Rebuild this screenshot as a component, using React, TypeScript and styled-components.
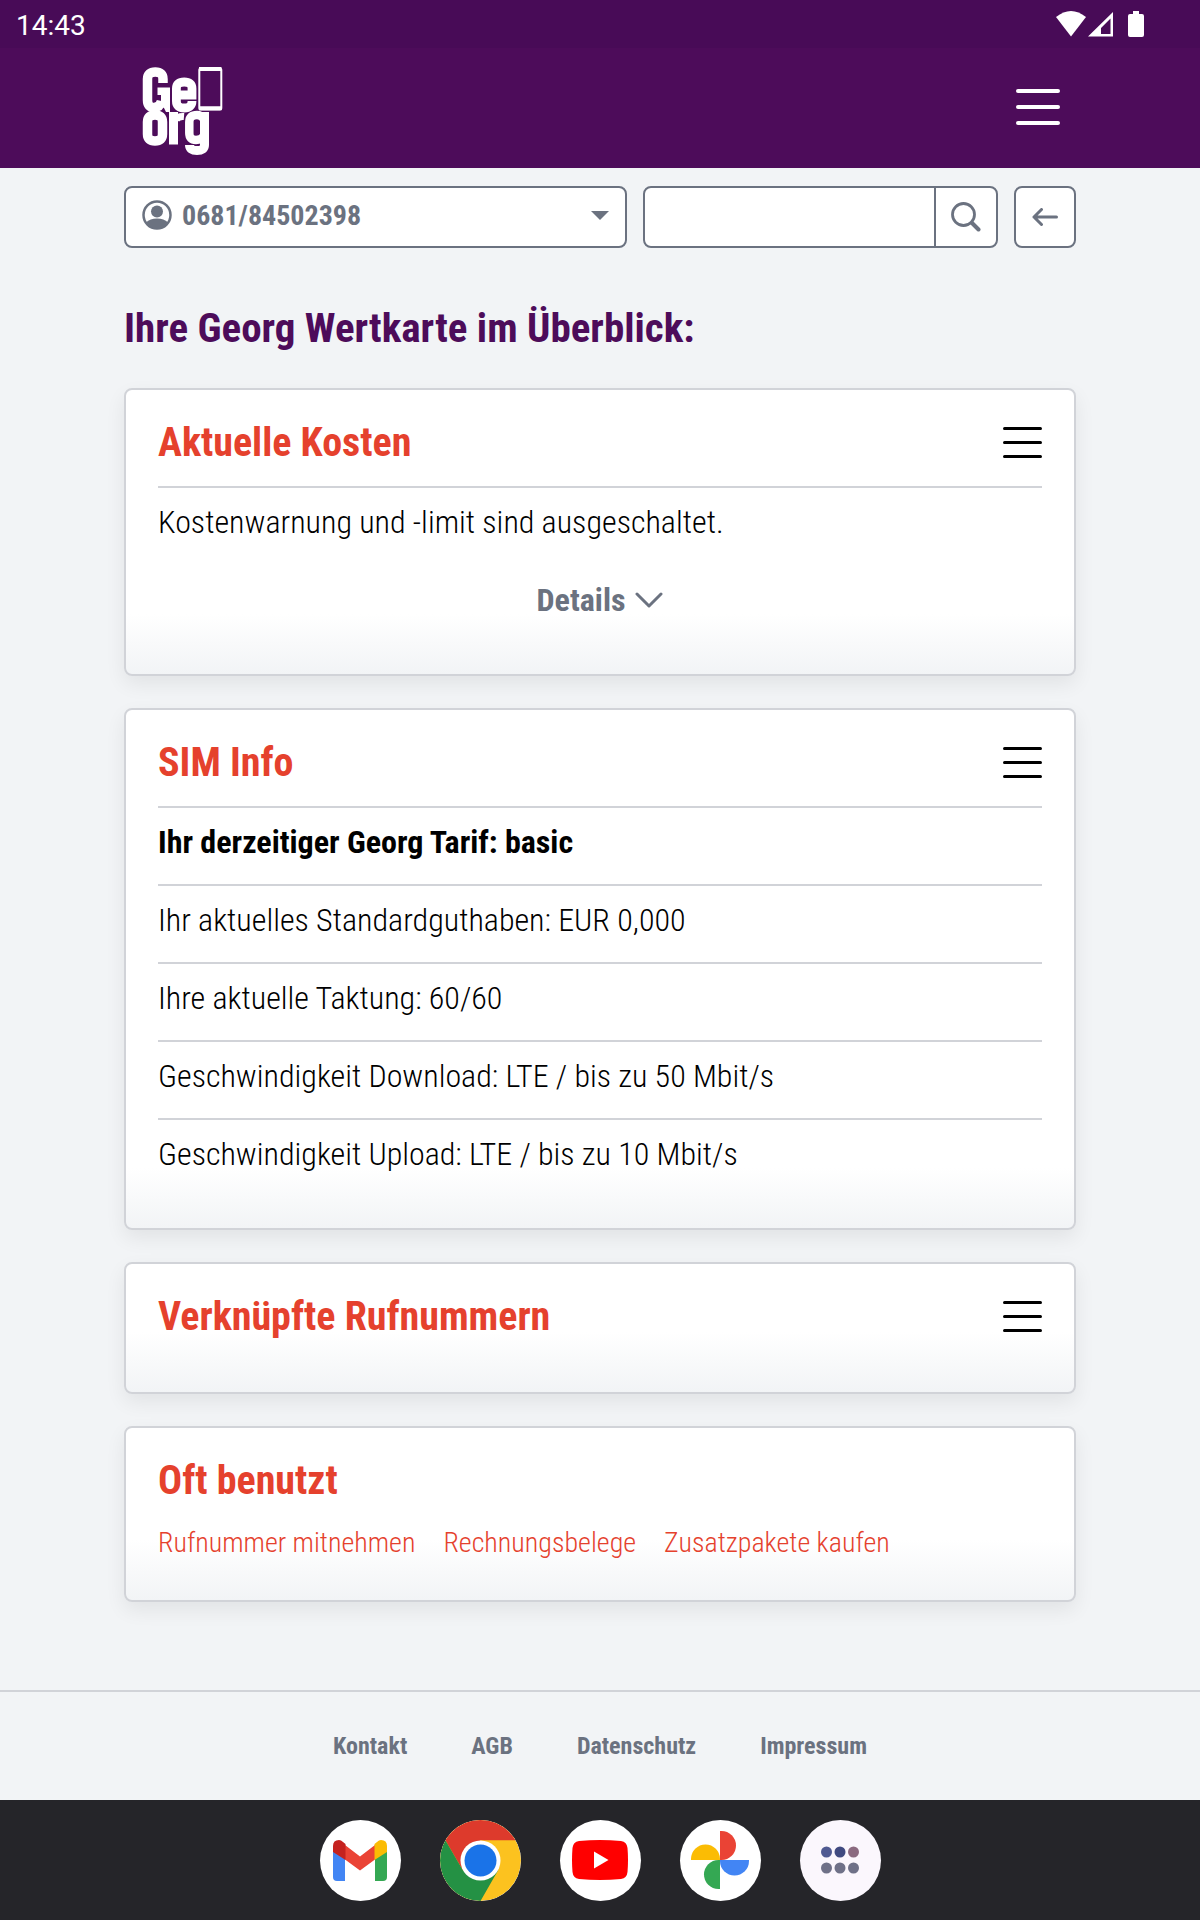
import React from "react";
import styled, { createGlobalStyle } from "styled-components";

const condensed = `"Roboto Condensed", "Liberation Sans Narrow", Roboto, sans-serif`;
const color = {
  purple: "#4d0c5a",
  purpleDark: "#480b57",
  orange: "#e5412d",
  grey: "#6b7280",
  line: "#d1d3d8",
  page: "#f2f4f6",
};

const GlobalStyle = createGlobalStyle`
  *, *::before, *::after { box-sizing: border-box; }
  body { margin: 0; background: ${color.page}; font-family: ${condensed}; color: #000; }
  button, input, select { font: inherit; color: inherit; }
  h1, h2, p { margin: 0; padding: 0; }
  svg { display: block; flex: none; }
`;

const Page = styled.div`
  display: flex;
  flex-direction: column;
  min-height: 100vh;
`;

const StatusBar = styled.div`
  display: flex;
  align-items: center;
  justify-content: space-between;
  height: 48px;
  padding: 0 54px 0 16px;
  background: ${color.purpleDark};
  color: #fff;
`;

const Clock = styled.time`
  padding-top: 4px;
  font: 400 28px/32px Roboto, sans-serif;
`;

const StatusIcons = styled.div`
  display: flex;
  align-items: center;
`;

const Header = styled.header`
  display: flex;
  justify-content: center;
  background: ${color.purple};
`;

const HeaderInner = styled.div`
  display: flex;
  align-items: center;
  justify-content: space-between;
  width: 100%;
  max-width: 952px;
  height: 120px;
  padding: 0 16px 2px;
`;

const MenuButton = styled.button<{ $light?: boolean }>`
  display: flex;
  padding: 0;
  border: 0;
  background: none;
  color: ${(p) => (p.$light ? "#fff" : "#000")};
  cursor: pointer;
`;

const Main = styled.main`
  display: flex;
  flex-direction: column;
  width: 100%;
  max-width: 952px;
  margin: 0 auto;
  padding: 18px 0 88px;
`;

const Toolbar = styled.div`
  display: grid;
  grid-template-columns: minmax(0, 503fr) minmax(0, 355fr) 62px;
  gap: 16px;
  height: 62px;
`;

const outlined = `
  border: 2px solid ${color.grey};
  border-radius: 8px;
  background: #fff;
  color: ${color.grey};
  overflow: hidden;
`;

const NumberPicker = styled.label`
  ${outlined}
  display: flex;
  align-items: center;
  gap: 10px;
  padding: 0 16px 4px;
`;

const NumberSelect = styled.select`
  flex: 1;
  appearance: none;
  border: 0;
  padding: 0;
  background: none;
  font-size: 28px;
  font-weight: 700;
`;

const SearchForm = styled.form`
  ${outlined}
  display: flex;
`;

const SearchInput = styled.input`
  flex: 1;
  min-width: 0;
  border: 0;
  padding: 0 16px;
  background: none;
  font-size: 28px;
`;

const SearchButton = styled.button`
  display: grid;
  place-items: center;
  width: 62px;
  padding: 0;
  border: 0;
  border-left: 2px solid ${color.grey};
  background: none;
`;

const BackButton = styled.button`
  ${outlined}
  display: grid;
  place-items: center;
  padding: 0;
`;

const PageTitle = styled.h1`
  padding: 56px 0 36px;
  color: ${color.purple};
  font-size: 41px;
  line-height: 48px;
`;

const Cards = styled.div`
  display: flex;
  flex-direction: column;
  gap: 32px;
`;

const Card = styled.section`
  padding: 0 32px 32px;
  border: 2px solid ${color.line};
  border-radius: 8px;
  background: linear-gradient(to top, ${color.page}, #fff 60px);
  box-shadow: 0 8px 20px rgba(0, 0, 0, 0.07);
`;

const CardHeader = styled.div`
  display: flex;
  align-items: center;
  justify-content: space-between;
  height: 96px;
  padding-top: 8px;
`;

const CardTitle = styled.h2`
  padding-top: 2px;
  color: ${color.orange};
  font-size: 40px;
  line-height: 48px;
`;

const Row = styled.p<{ $strong?: boolean }>`
  padding: 14px 0 22px;
  border-top: 2px solid ${color.line};
  font-size: 32px;
  line-height: 40px;
  font-weight: ${(p) => (p.$strong ? 700 : 300)};
`;

const DetailsButton = styled.button`
  display: flex;
  align-items: center;
  justify-content: center;
  gap: 10px;
  width: 100%;
  height: 78px;
  padding: 0 0 6px;
  border: 0;
  background: none;
  color: ${color.grey};
  font-size: 32px;
  font-weight: 700;
`;

const Links = styled.nav`
  display: flex;
  gap: 28px;
  padding-bottom: 6px;
`;

const TextLink = styled.a`
  color: ${color.orange};
  font-size: 28px;
  line-height: 38px;
  font-weight: 300;
  text-decoration: none;
`;

const Footer = styled.footer`
  display: flex;
  justify-content: center;
  gap: 64px;
  padding: 38px 0;
  margin-top: auto;
  border-top: 2px solid ${color.line};
`;

const FooterLink = styled.a`
  color: ${color.grey};
  font-size: 24px;
  line-height: 32px;
  font-weight: 700;
  text-decoration: none;
`;

const Dock = styled.nav`
  display: flex;
  align-items: center;
  justify-content: center;
  gap: 39px;
  height: 120px;
  background: #252529;
`;

const DockButton = styled.button<{ $tint?: string }>`
  display: grid;
  place-items: center;
  width: 81px;
  height: 81px;
  padding: 0;
  border: 0;
  border-radius: 50%;
  background: ${(p) => p.$tint ?? "#fff"};
  overflow: hidden;
`;

function Logo() {
  return (
    <svg width="84" height="98" viewBox="0 -1 84 98" role="img" aria-label="Georg">
      <g fill="none" stroke="#fff">
        <path d="M23 24V20Q23 13 15.300 13T7.500 20V41Q7.500 48.500 14 48.500Q20 48.500 21.500 42" strokeWidth="9.500" />
        <path d="M17.500 28.500h12.500V53h-4l-2-4-3-2V36h-3.500z" fill="#fff" stroke="none" />
        <path d="M37 36H52V29.500Q52 23 44.200 23T36.400 29.500V42Q36.400 49 44.200 49Q52 49 52 42" strokeWidth="8.800" />
        <rect x="59.300" y="9.500" width="22" height="41" rx="1.500" strokeWidth="2" />
        <path d="M59 10h22.500M59 49.200h22.500" strokeWidth="4" />
        <path d="M15 56Q22.500 56 22.500 63V75Q22.500 82 15 82T7.500 75V63Q7.500 56 15 56z" strokeWidth="9.500" />
        <path d="M33.500 53V85.500" strokeWidth="9" />
        <path d="M36 61Q38 57 44 57.500" strokeWidth="7" />
        <path d="M64.500 53V86Q64.500 91.500 57 91.500Q49.500 91.500 49.500 86" strokeWidth="9" />
        <path d="M64 60Q61 56 57 56Q49.300 56 49.300 63V74Q49.300 81 56 81Q61 81 64 77" strokeWidth="8.500" />
      </g>
    </svg>
  );
}

function Bars({ width, gap, stroke }: { width: number; gap: number; stroke: number }) {
  const height = gap * 2 + stroke;
  const mid = stroke / 2;
  return (
    <svg width={width} height={height} stroke="currentColor" strokeWidth={stroke} strokeLinecap="round" aria-hidden>
      {[0, 1, 2].map((i) => (
        <line key={i} x1={mid} x2={width - mid} y1={mid + i * gap} y2={mid + i * gap} />
      ))}
    </svg>
  );
}

function WifiIcon() {
  return (
    <svg width="32" height="26" viewBox="0 0 32 26" aria-hidden>
      <path fill="#fff" d="M0 6Q15-6 30 6L15 25.500z" />
    </svg>
  );
}

function SignalIcon() {
  return (
    <svg width="40" height="26" viewBox="0 0 40 26" aria-hidden>
      <path fill="#fff" fillRule="evenodd" d="M0 25.500L25 1V25.500zM13 23H22.500V7.500L13 17z" />
    </svg>
  );
}

function BatteryIcon() {
  return (
    <svg width="18" height="26" viewBox="0 0 18 26" aria-hidden>
      <path fill="#fff" d="M5 0h6v3h3q2 0 2 2v19q0 2-2 2H2q-2 0-2-2V5q0-2 2-2h3z" />
    </svg>
  );
}

function PersonIcon() {
  return (
    <svg width="30" height="30" viewBox="0 0 30 30" aria-hidden>
      <circle cx="15" cy="15" r="13.500" fill="none" stroke="currentColor" strokeWidth="2.500" />
      <circle cx="15" cy="11.500" r="6" fill="currentColor" />
      <path fill="currentColor" d="M4 22.500Q8 18.500 15 18.500T26 22.500Q22 29 15 29T4 22.500z" />
    </svg>
  );
}

function SearchIcon() {
  return (
    <svg width="30" height="30" viewBox="0 0 30 30" fill="none" stroke="currentColor" strokeLinecap="round" aria-hidden>
      <circle cx="12.500" cy="12.500" r="11" strokeWidth="2.800" />
      <path d="M21 21l6.500 6.500" strokeWidth="4" />
    </svg>
  );
}

function BackIcon() {
  return (
    <svg width="26" height="18" viewBox="0 0 26 18" fill="none" stroke="currentColor" strokeWidth="3" strokeLinecap="round" strokeLinejoin="round" aria-hidden>
      <path d="M24.500 9H2M9.500 1.500L2 9l7.500 7.500" />
    </svg>
  );
}

function ChevronIcon() {
  return (
    <svg width="28" height="16" viewBox="0 0 28 16" fill="none" stroke="currentColor" strokeWidth="3" strokeLinecap="round" strokeLinejoin="round" aria-hidden>
      <path d="M2 2l12 12L26 2" />
    </svg>
  );
}

function CaretIcon() {
  return (
    <svg width="18" height="9" viewBox="0 0 18 9" aria-hidden>
      <path fill="currentColor" d="M0 0h18L9 9z" />
    </svg>
  );
}

function GmailIcon() {
  return (
    <svg width="54" height="41" viewBox="0 0 54 41" aria-hidden>
      <path fill="#4285f4" d="M0 10l12 9v22H4q-4 0-4-4z" />
      <path fill="#34a853" d="M42 19l12-9v27q0 4-4 4h-8z" />
      <path fill="#ea4335" d="M12 5l15 11.500L42 5v14.500L27 30.500 12 19.500z" />
      <path fill="#c5221f" d="M0 6Q0 0 6 0q2 0 4 2l2.500 2v16L0 12z" />
      <path fill="#fbbc04" d="M54 6q0-6-6-6-2 0-4 2l-2.500 2v16L54 12z" />
    </svg>
  );
}

function ChromeIcon() {
  return (
    <svg width="81" height="81" viewBox="-40.500 -40.500 81 81" aria-hidden>
      <circle r="40.500" fill="#fcc21f" />
      <path fill="#dd3a2c" d="M-35.100-20.200A40.500 40.500 0 0 1 35.100-20.200H0L-17.500 10z" />
      <path fill="#249144" d="M-35.100-20.200A40.500 40.500 0 0 0 0 40.500L17.500 10.100-17.500 10.100z" />
      <circle r="20" fill="#fff" />
      <circle r="16" fill="#1a73e8" />
    </svg>
  );
}

function YouTubeIcon() {
  return (
    <svg width="56" height="40" viewBox="0 0 56 40" aria-hidden>
      <path fill="#f00" d="M7 1Q28-1 49 1q6 1 6.500 7 1 12 0 24-.5 6-6.500 7-21 2-42 0-6-1-6.500-7-1-12 0-24Q1 2 7 1z" />
      <path fill="#fff" d="M22 11.500v17L36.500 20z" />
    </svg>
  );
}

function PhotosIcon() {
  return (
    <svg width="58" height="58" viewBox="-29 -29 58 58" aria-hidden>
      <path fill="#ea4335" d="M0 0V-29H1.500A14.500 14.500 0 0 1 1.500 0z" />
      <path fill="#4285f4" d="M0 0H29V1A14.500 14.500 0 0 1 0 1z" />
      <path fill="#34a853" d="M0 0V29H-1.500A14.500 14.500 0 0 1 -1.500 0z" />
      <path fill="#fbbc04" d="M0 0H-29V-1A14.500 14.500 0 0 1 0 -1z" />
    </svg>
  );
}

const appDots = ["#505a92", "#404a80", "#8b6a80", "#6f7188", "#6f7188", "#6f7188"];

function AppsIcon() {
  return (
    <svg width="38" height="28" viewBox="0 0 38 28" aria-hidden>
      {appDots.map((fill, i) => (
        <circle key={i} cx={5.5 + (i % 3) * 13.5} cy={6 + Math.floor(i / 3) * 16} r="5.500" fill={fill} />
      ))}
    </svg>
  );
}

const simRows = [
  "Ihr aktuelles Standardguthaben: EUR 0,000",
  "Ihre aktuelle Taktung: 60/60",
  "Geschwindigkeit Download: LTE / bis zu 50 Mbit/s",
  "Geschwindigkeit Upload: LTE / bis zu 10 Mbit/s",
];

function CardHead({ title, menu = true }: { title: string; menu?: boolean }) {
  return (
    <CardHeader>
      <CardTitle>{title}</CardTitle>
      {menu && (
        <MenuButton type="button" aria-label={`Menü ${title}`}>
          <Bars width={39} gap={14} stroke={3} />
        </MenuButton>
      )}
    </CardHeader>
  );
}

export default function App() {
  return (
    <Page>
      <GlobalStyle />
      <StatusBar>
        <Clock>14:43</Clock>
        <StatusIcons>
          <WifiIcon />
          <SignalIcon />
          <BatteryIcon />
        </StatusIcons>
      </StatusBar>
      <Header>
        <HeaderInner>
          <Logo />
          <MenuButton type="button" $light aria-label="Hauptmenü">
            <Bars width={44} gap={16} stroke={4} />
          </MenuButton>
        </HeaderInner>
      </Header>
      <Main>
        <Toolbar>
          <NumberPicker>
            <PersonIcon />
            <NumberSelect aria-label="Rufnummer">
              <option>0681/84502398</option>
            </NumberSelect>
            <CaretIcon />
          </NumberPicker>
          <SearchForm>
            <SearchInput type="search" aria-label="Suche" />
            <SearchButton type="button" aria-label="Suchen">
              <SearchIcon />
            </SearchButton>
          </SearchForm>
          <BackButton type="button" aria-label="Zurück">
            <BackIcon />
          </BackButton>
        </Toolbar>
        <PageTitle>Ihre Georg Wertkarte im Überblick:</PageTitle>
        <Cards>
          <Card>
            <CardHead title="Aktuelle Kosten" />
            <Row>Kostenwarnung und -limit sind ausgeschaltet.</Row>
            <DetailsButton type="button">
              Details
              <ChevronIcon />
            </DetailsButton>
          </Card>
          <Card>
            <CardHead title="SIM Info" />
            <Row $strong>Ihr derzeitiger Georg Tarif: basic</Row>
            {simRows.map((text) => (
              <Row key={text}>{text}</Row>
            ))}
          </Card>
          <Card>
            <CardHead title="Verknüpfte Rufnummern" />
          </Card>
          <Card>
            <CardHead title="Oft benutzt" menu={false} />
            <Links>
              <TextLink href="#">Rufnummer mitnehmen</TextLink>
              <TextLink href="#">Rechnungsbelege</TextLink>
              <TextLink href="#">Zusatzpakete kaufen</TextLink>
            </Links>
          </Card>
        </Cards>
      </Main>
      <Footer>
        <FooterLink href="#">Kontakt</FooterLink>
        <FooterLink href="#">AGB</FooterLink>
        <FooterLink href="#">Datenschutz</FooterLink>
        <FooterLink href="#">Impressum</FooterLink>
      </Footer>
      <Dock aria-label="Apps">
        <DockButton aria-label="Gmail"><GmailIcon /></DockButton>
        <DockButton aria-label="Chrome"><ChromeIcon /></DockButton>
        <DockButton aria-label="YouTube"><YouTubeIcon /></DockButton>
        <DockButton aria-label="Fotos"><PhotosIcon /></DockButton>
        <DockButton aria-label="Alle Apps" $tint="#fbf7fd"><AppsIcon /></DockButton>
      </Dock>
    </Page>
  );
}
